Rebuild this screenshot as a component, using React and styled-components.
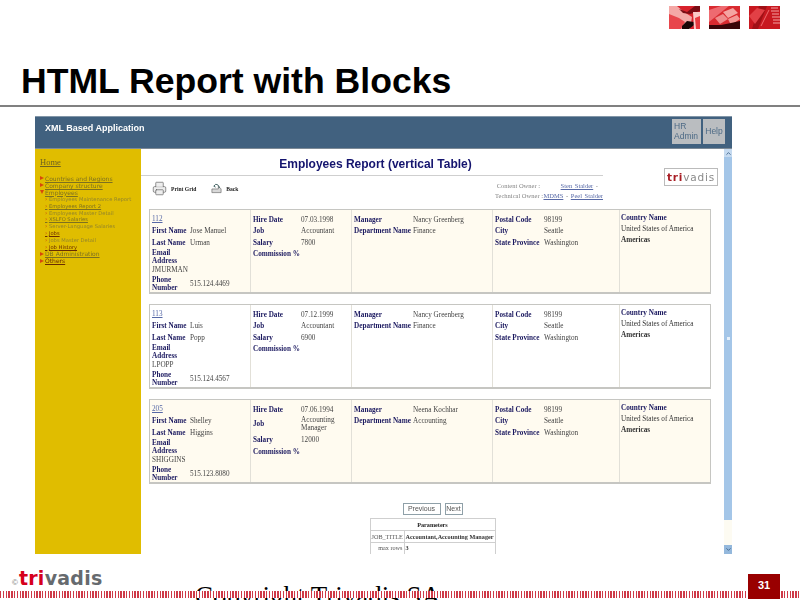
import styled, { createGlobalStyle } from 'styled-components';
import { ChevronUp, ChevronDown, Printer } from 'lucide-react';

const GlobalStyle = createGlobalStyle`
  html, body { margin: 0; padding: 0; background: #fff; }
  body { width: 800px; height: 600px; overflow: hidden; font-family: "Liberation Sans", Arial, sans-serif; }
`;

const employees = [
  { id: '112', first: 'Jose Manuel', last: 'Urman', email: 'JMURMAN', phone: '515.124.4469', hire: '07.03.1998', job: 'Accountant', salary: '7800', manager: 'Nancy Greenberg', dept: 'Finance', zip: '98199', tint: true },
  { id: '113', first: 'Luis', last: 'Popp', email: 'LPOPP', phone: '515.124.4567', hire: '07.12.1999', job: 'Accountant', salary: '6900', manager: 'Nancy Greenberg', dept: 'Finance', zip: '98199' },
  { id: '205', first: 'Shelley', last: 'Higgins', email: 'SHIGGINS', phone: '515.123.8080', hire: '07.06.1994', job: 'Accounting Manager', salary: '12000', manager: 'Neena Kochhar', dept: 'Accounting', zip: '98199', tint: true, tallJob: true },
];

const menu = [
  { label: 'Countries and Regions', kind: 'top' },
  { label: 'Company structure', kind: 'top' },
  { label: 'Employees', kind: 'open' },
  { label: 'Employees Maintenance Report', kind: 'sub', faint: true },
  { label: 'Employees Report 2', kind: 'sub' },
  { label: 'Employees Master Detail', kind: 'sub', faint: true },
  { label: 'XSLFO Salaries', kind: 'sub' },
  { label: 'Server-Language Salaries', kind: 'sub', faint: true },
  { label: 'Jobs', kind: 'sub', dark: true },
  { label: 'Jobs Master Detail', kind: 'sub', faint: true },
  { label: 'Job History', kind: 'sub', dark: true },
  { label: 'DB Administration', kind: 'top' },
  { label: 'Others', kind: 'top', dark: true },
];

const Slide = styled.div`
  width: 800px;
  height: 600px;
  display: flex;
  flex-direction: column;
  overflow: hidden;
`;

const Thumbs = styled.div`
  display: flex;
  justify-content: flex-end;
  gap: 9px;
  height: 23px;
  padding: 6px 20px 0 0;
`;

const Thumb = styled.svg`
  display: block;
  width: 31px;
  height: 23px;
  filter: blur(0.7px);
`;

const TitleBar = styled.header`
  height: 76px;
  padding-left: 21px;
  display: flex;
  align-items: flex-end;
  border-bottom: 2px solid #808080;
`;

const Title = styled.h1`
  margin: 0 0 3px;
  font-size: 35.6px;
  line-height: 42px;
  font-weight: 700;
  color: #000;
  white-space: nowrap;
`;

const Shot = styled.section`
  width: 697px;
  height: 438px;
  margin: 9px 0 0 35px;
  flex: none;
  display: grid;
  grid-template-columns: 106px 583px 8px;
  grid-template-rows: 33px 405px;
  overflow: hidden;
  filter: blur(0.3px);
`;

const AppBar = styled.div`
  grid-column: 1 / 4;
  background: #41617f;
  border-top: 1px solid #8296a8;
  border-bottom: 1px solid #7d8a96;
  box-sizing: border-box;
  padding: 2px 7px 0 10px;
  display: flex;
  justify-content: space-between;
  align-items: flex-start;
`;

const AppName = styled.span`
  margin-top: 4px;
  color: #fff;
  font-size: 9px;
  font-weight: 700;
  line-height: 11px;
`;

const AppTabs = styled.div`
  display: flex;
  gap: 2px;
`;

const AppTab = styled.div`
  width: ${p => p.$w}px;
  height: 25px;
  box-sizing: border-box;
  background: #babdc0;
  color: #4d6a85;
  font-size: 8.5px;
  line-height: 9.5px;
  padding: ${p => (p.$center ? '8px 0 0' : '3px 0 0 2px')};
  text-align: ${p => (p.$center ? 'center' : 'left')};
`;

const Sidebar = styled.nav`
  background: #e0bd00;
  padding: 8px 0 0 5px;
`;

const HomeLink = styled.div`
  font-family: "Liberation Serif", serif;
  font-size: 8.5px;
  line-height: 11px;
  color: #6f6320;
  text-decoration: underline;
  margin-bottom: 7px;
`;

const MenuItem = styled.div`
  display: flex;
  align-items: center;
  gap: ${p => (p.$sub ? '1.5px' : '1px')};
  height: 6.85px;
  padding-left: ${p => (p.$sub ? '5px' : '0')};
  white-space: nowrap;
  font-family: "DejaVu Sans", sans-serif;
  font-size: ${p => (p.$sub ? '5.2px' : '6px')};
  color: ${p => (p.$dark ? '#6a2c00' : p.$faint ? '#93852a' : '#7d7020')};
  text-decoration: ${p => (p.$faint ? 'none' : 'underline')};
`;

const Arrow = styled.span`
  flex: none;
  width: 0;
  height: 0;
  border-left: 4px solid #d8470b;
  border-top: 2.5px solid transparent;
  border-bottom: 2.5px solid transparent;
`;

const DownArrow = styled.span`
  flex: none;
  width: 0;
  height: 0;
  border-top: 4px solid #d8470b;
  border-left: 2.5px solid transparent;
  border-right: 2.5px solid transparent;
`;

const SubArrow = styled.span`
  flex: none;
  font-size: 6px;
  line-height: 6px;
  color: #c9450c;
  text-decoration: none;
`;

const Main = styled.main`
  background: #fff;
  overflow: hidden;
`;

const Top = styled.div`
  display: flex;
  height: 60px;
`;

const TopLeft = styled.div`
  width: 462px;
`;

const ReportTitle = styled.h2`
  margin: 0;
  height: 27px;
  box-sizing: border-box;
  padding: 8px 0 0 7px;
  border-bottom: 1px solid #cfcfcf;
  text-align: center;
  color: #14146e;
  font-size: 12px;
  line-height: 14px;
  font-weight: 700;
  white-space: nowrap;
`;

const Tools = styled.div`
  display: flex;
  justify-content: space-between;
  align-items: flex-start;
  padding: 4px 0 0 11px;
`;

const ToolGroup = styled.div`
  display: flex;
  align-items: center;
  margin-top: 1px;
`;

const ToolLabel = styled.span`
  margin: 0 15px 0 4px;
  font-family: "Liberation Serif", serif;
  font-size: 5.6px;
  font-weight: 700;
  color: #222;
  white-space: nowrap;
`;

const Owners = styled.div`
  display: grid;
  grid-template-columns: auto 60px;
  margin-top: 1px;
  font-family: "Liberation Serif", serif;
  font-size: 6.5px;
  line-height: 10px;
  color: #858585;
  white-space: nowrap;
`;

const OwnerLabel = styled.span`
  text-align: right;
  padding-right: ${p => p.$inset || 0}px;
`;

const OwnerLinks = styled.span`
  text-align: right;
  padding-right: ${p => p.$inset || 0}px;
  word-spacing: 1px;
  a { color: #5668a6; text-decoration: underline; }
`;

const VendorBox = styled.div`
  margin: 19px 0 0 61px;
  width: 54px;
  height: 18px;
  box-sizing: border-box;
  border: 1px solid #bbb;
  text-align: center;
  font-family: "DejaVu Sans", sans-serif;
  font-size: 10.5px;
  line-height: 16px;
  letter-spacing: 0.8px;
  color: #8a8a8a;
  white-space: nowrap;
  b { color: #a81d24; }
`;

const Cards = styled.div`
  display: flex;
  flex-direction: column;
  gap: 10px;
  padding: 0 13px 0 8px;
`;

const Card = styled.article`
  height: 85px;
  box-sizing: border-box;
  display: grid;
  grid-template-columns: 100px 101px 141px 127px 1fr;
  border: 1px solid #c6c6c2;
  border-bottom-width: 2px;
  background: ${p => (p.$tint ? '#fffbf0' : '#fff')};
`;

const Col = styled.div`
  padding: 4px 2px 0;
  border-left: ${p => (p.$first ? 'none' : '1px solid #e2e0d8')};
  font-family: "Liberation Serif", serif;
  font-size: 7.2px;
  line-height: 8px;
  min-width: 0;
`;

const Row = styled.div`
  display: grid;
  grid-template-columns: ${p => p.$label}px 1fr;
  align-items: center;
  min-height: 11.5px;
  padding-bottom: ${p => p.$pad || 0}px;
`;

const Label = styled.span`
  color: #1c1a60;
  font-weight: 700;
  white-space: ${p => (p.$wrap ? 'normal' : 'nowrap')};
`;

const Value = styled.span`
  color: #444;
`;

const IdLink = styled.a`
  display: block;
  height: 11.5px;
  line-height: 11.5px;
  color: #5668a6;
  text-decoration: underline;
`;

const CountryCol = styled(Col)`
  padding: 3px 1px 0;
`;

const Country = styled.div`
  height: 11px;
  line-height: 11px;
  white-space: nowrap;
  color: ${p => (p.$label ? '#1c1a60' : '#333')};
  font-weight: ${p => (p.$bold ? 700 : 400)};
`;

const Bottom = styled.div`
  display: flex;
  flex-direction: column;
  align-items: center;
  padding: 19px 13px 0 0;
  margin-left: 13px;
`;

const Pager = styled.div`
  display: flex;
  gap: 4px;
  margin-bottom: 3px;
`;

const PagerButton = styled.button`
  width: ${p => p.$w}px;
  height: 12px;
  padding: 0;
  border: 1px solid #8fa0a8;
  background: #fff;
  color: #555;
  font-family: "Liberation Sans", sans-serif;
  font-size: 7px;
  line-height: 10px;
`;

const ParamTable = styled.table`
  width: 126px;
  table-layout: fixed;
  border-collapse: collapse;
  font-family: "Liberation Serif", serif;
  font-size: 6.2px;
  col:first-child { width: 34px; }
  th, td { border: 1px solid #cfcfcf; height: 11px; padding: 0 1px; white-space: nowrap; line-height: 10px; }
  th { text-align: center; color: #222; }
  td:first-child { text-align: right; color: #555; }
  td:last-child { font-weight: 700; color: #333; }
  tr:last-child td { height: 18px; vertical-align: top; }
`;

const Scrollbar = styled.div`
  display: flex;
  flex-direction: column;
  background: #fdfbf2;
`;

const ScrollThumb = styled.div`
  height: ${p => p.$h}px;
  background: #a4c6e8;
  display: flex;
  align-items: center;
  justify-content: center;
  flex: none;
`;

const Grip = styled.span`
  width: 3px;
  height: 3px;
  background: #e6f0fa;
`;

const ScrollEnd = styled.div`
  margin-top: ${p => (p.$bottom ? 'auto' : '0')};
  height: ${p => (p.$bottom ? 9 : 8)}px;
  flex: none;
  display: flex;
  align-items: center;
  justify-content: center;
  background: ${p => (p.$bottom ? '#94b8dc' : '#c5daf0')};
  color: #3e6288;
`;

const Footer = styled.footer`
  position: relative;
  flex: 1;
  min-height: 0;
  display: flex;
  overflow: hidden;
`;

const Brand = styled.div`
  width: 195px;
  padding: 14px 0 0 12px;
  box-sizing: border-box;
  display: flex;
  align-items: baseline;
  height: 36px;
`;

const BrandCopy = styled.span`
  font-size: 8px;
  color: #777;
  margin-right: 1px;
`;

const BrandName = styled.span`
  font-family: "DejaVu Sans", sans-serif;
  font-weight: 700;
  font-size: 19px;
  line-height: 21px;
  letter-spacing: 0.25px;
  color: #666a6e;
  b { color: #d6001c; font-weight: 700; }
`;

const Copyright = styled.div`
  font-family: "Liberation Serif", serif;
  font-size: 27px;
  line-height: 31px;
  padding-top: 27px;
  color: #000;
  white-space: nowrap;
`;

const Stripes = styled.div`
  position: absolute;
  left: 0;
  right: 0;
  top: 37px;
  height: 7px;
  background: repeating-linear-gradient(90deg, #cf3a48 0 1.4px, #fff 1.4px 2.8px);
`;

const PageNo = styled.div`
  position: absolute;
  left: 748px;
  top: 20px;
  width: 32px;
  height: 25px;
  background: #990000;
  color: #fff;
  font-size: 11px;
  font-weight: 700;
  line-height: 23px;
  text-align: center;
`;

function FaceThumb() {
  return (
    <Thumb viewBox="0 0 31 23">
      <rect width="31" height="23" fill="#d8222c" />
      <path d="M0 0h8l7 6 8 5-2 12H0z" fill="#f4a8a6" />
      <path d="M0 8l10 4 6 4-4 7H0z" fill="#e8464c" />
      <path d="M10 3l8 3 8-6 5 0v5l-10 3-7-1z" fill="#7a0c14" />
      <path d="M13 20l5-5 7 1 0 3-5 4h-7z" fill="#1a0506" />
      <path d="M24 6h7v17h-6z" fill="#fbc9c6" />
      <path d="M26 12l5-2v13h-4z" fill="#e73a40" />
    </Thumb>
  );
}

function KeysThumb() {
  return (
    <Thumb viewBox="0 0 31 23">
      <rect width="31" height="23" fill="#d92a30" />
      <path d="M0 4l12-4h8L0 16z" fill="#ee6a70" />
      <path d="M14 6l10-4 5 5-10 5z" fill="#f4a4a2" />
      <path d="M6 12l8-4 5 5-8 5z" fill="#ef8c8c" />
      <path d="M19 13l9-4 3 4-9 6z" fill="#f39896" />
      <path d="M0 19l12 0 10-2 9-2v8H0z" fill="#3a0508" />
    </Thumb>
  );
}

function BoardThumb() {
  return (
    <Thumb viewBox="0 0 31 23">
      <rect width="31" height="23" fill="#c81820" />
      <path d="M3 23L10 0h8l-9 23z" fill="#a01016" />
      <path d="M0 10l8-8 8 2-10 14z" fill="#e24046" />
      <path d="M22 2h7M22 5h8M23 8h7M23 11h8M24 14h7M24 17h7" stroke="#f4a0a0" strokeWidth="1.2" />
      <path d="M12 20l8-16" stroke="#ef6a6e" strokeWidth="1" />
    </Thumb>
  );
}

function BackIcon() {
  return (
    <svg width="11" height="11" viewBox="0 0 12 11">
      <path d="M1 6h7V3l3 3v4H1z" fill="#d8d8d8" stroke="#666" strokeWidth="0.7" />
      <path d="M9 5C9 2 7 1 5 1L3 3l2 1" fill="none" stroke="#355" strokeWidth="1" />
    </svg>
  );
}

function EmployeeCard({ e }) {
  return (
    <Card $tint={e.tint}>
      <Col $first>
        <IdLink>{e.id}</IdLink>
        <Row $label={38}><Label>First Name</Label><Value>{e.first}</Value></Row>
        <Row $label={38}><Label>Last Name</Label><Value>{e.last}</Value></Row>
        <Row $label={38}><Label $wrap>Email<br />Address</Label></Row>
        <Row $label={70}><Value>{e.email}</Value></Row>
        <Row $label={38}><Label $wrap>Phone<br />Number</Label><Value>{e.phone}</Value></Row>
      </Col>
      <Col>
        <Row $label={48}><Label>Hire Date</Label><Value>{e.hire}</Value></Row>
        <Row $label={48} $pad={e.tallJob ? 3 : 0}><Label>Job</Label><Value>{e.job}</Value></Row>
        <Row $label={48}><Label>Salary</Label><Value>{e.salary}</Value></Row>
        <Row $label={48}><Label>Commission %</Label></Row>
      </Col>
      <Col>
        <Row $label={59}><Label>Manager</Label><Value>{e.manager}</Value></Row>
        <Row $label={59}><Label>Department Name</Label><Value>{e.dept}</Value></Row>
      </Col>
      <Col>
        <Row $label={49}><Label>Postal Code</Label><Value>{e.zip}</Value></Row>
        <Row $label={49}><Label>City</Label><Value>Seattle</Value></Row>
        <Row $label={49}><Label>State Province</Label><Value>Washington</Value></Row>
      </Col>
      <CountryCol>
        <Country $label $bold>Country Name</Country>
        <Country>United States of America</Country>
        <Country $bold>Americas</Country>
      </CountryCol>
    </Card>
  );
}

export default function App() {
  return (
    <Slide>
      <GlobalStyle />
      <Thumbs>
        <FaceThumb />
        <KeysThumb />
        <BoardThumb />
      </Thumbs>
      <TitleBar>
        <Title>HTML Report with Blocks</Title>
      </TitleBar>
      <Shot>
        <AppBar>
          <AppName>XML Based Application</AppName>
          <AppTabs>
            <AppTab $w={29}>HR<br />Admin</AppTab>
            <AppTab $w={22} $center>Help</AppTab>
          </AppTabs>
        </AppBar>
        <Sidebar>
          <HomeLink>Home</HomeLink>
          {menu.map(m => (
            <MenuItem key={m.label} $sub={m.kind === 'sub'} $dark={m.dark} $faint={m.faint}>
              {m.kind === 'top' && <Arrow />}
              {m.kind === 'open' && <DownArrow />}
              {m.kind === 'sub' && <SubArrow>›</SubArrow>}
              {m.label}
            </MenuItem>
          ))}
        </Sidebar>
        <Main>
          <Top>
            <TopLeft>
              <ReportTitle>Employees Report (vertical Table)</ReportTitle>
              <Tools>
                <ToolGroup>
                  <Printer size={15} strokeWidth={1} color="#555" fill="#eee" />
                  <ToolLabel>Print Grid</ToolLabel>
                  <BackIcon />
                  <ToolLabel>Back</ToolLabel>
                </ToolGroup>
                <Owners>
                  <OwnerLabel $inset={3}>Content Owner :</OwnerLabel>
                  <OwnerLinks $inset={5}><a>Sten Stalder</a> -</OwnerLinks>
                  <OwnerLabel>Technical Owner :</OwnerLabel>
                  <OwnerLinks><a>MDMS</a> - <a>Peel Stalder</a></OwnerLinks>
                </Owners>
              </Tools>
            </TopLeft>
            <VendorBox><b>tri</b>vadis</VendorBox>
          </Top>
          <Cards>
            {employees.map(e => <EmployeeCard key={e.id} e={e} />)}
          </Cards>
          <Bottom>
            <Pager>
              <PagerButton $w={38}>Previous</PagerButton>
              <PagerButton $w={18}>Next</PagerButton>
            </Pager>
            <ParamTable>
              <colgroup><col /><col /></colgroup>
              <tbody>
                <tr><th colSpan={2}>Parameters</th></tr>
                <tr><td>JOB_TITLE</td><td>Accountant,Accounting Manager</td></tr>
                <tr><td>max rows</td><td>3</td></tr>
              </tbody>
            </ParamTable>
          </Bottom>
        </Main>
        <Scrollbar>
          <ScrollEnd><ChevronUp size={7} strokeWidth={3} /></ScrollEnd>
          <ScrollThumb $h={363}><Grip /></ScrollThumb>
          <ScrollEnd $bottom><ChevronDown size={7} strokeWidth={3} /></ScrollEnd>
        </Scrollbar>
      </Shot>
      <Footer>
        <Brand>
          <BrandCopy>©</BrandCopy>
          <BrandName><b>tri</b>vadis</BrandName>
        </Brand>
        <Copyright>Copyright Trivadis SA</Copyright>
        <Stripes />
        <PageNo>31</PageNo>
      </Footer>
    </Slide>
  );
}
